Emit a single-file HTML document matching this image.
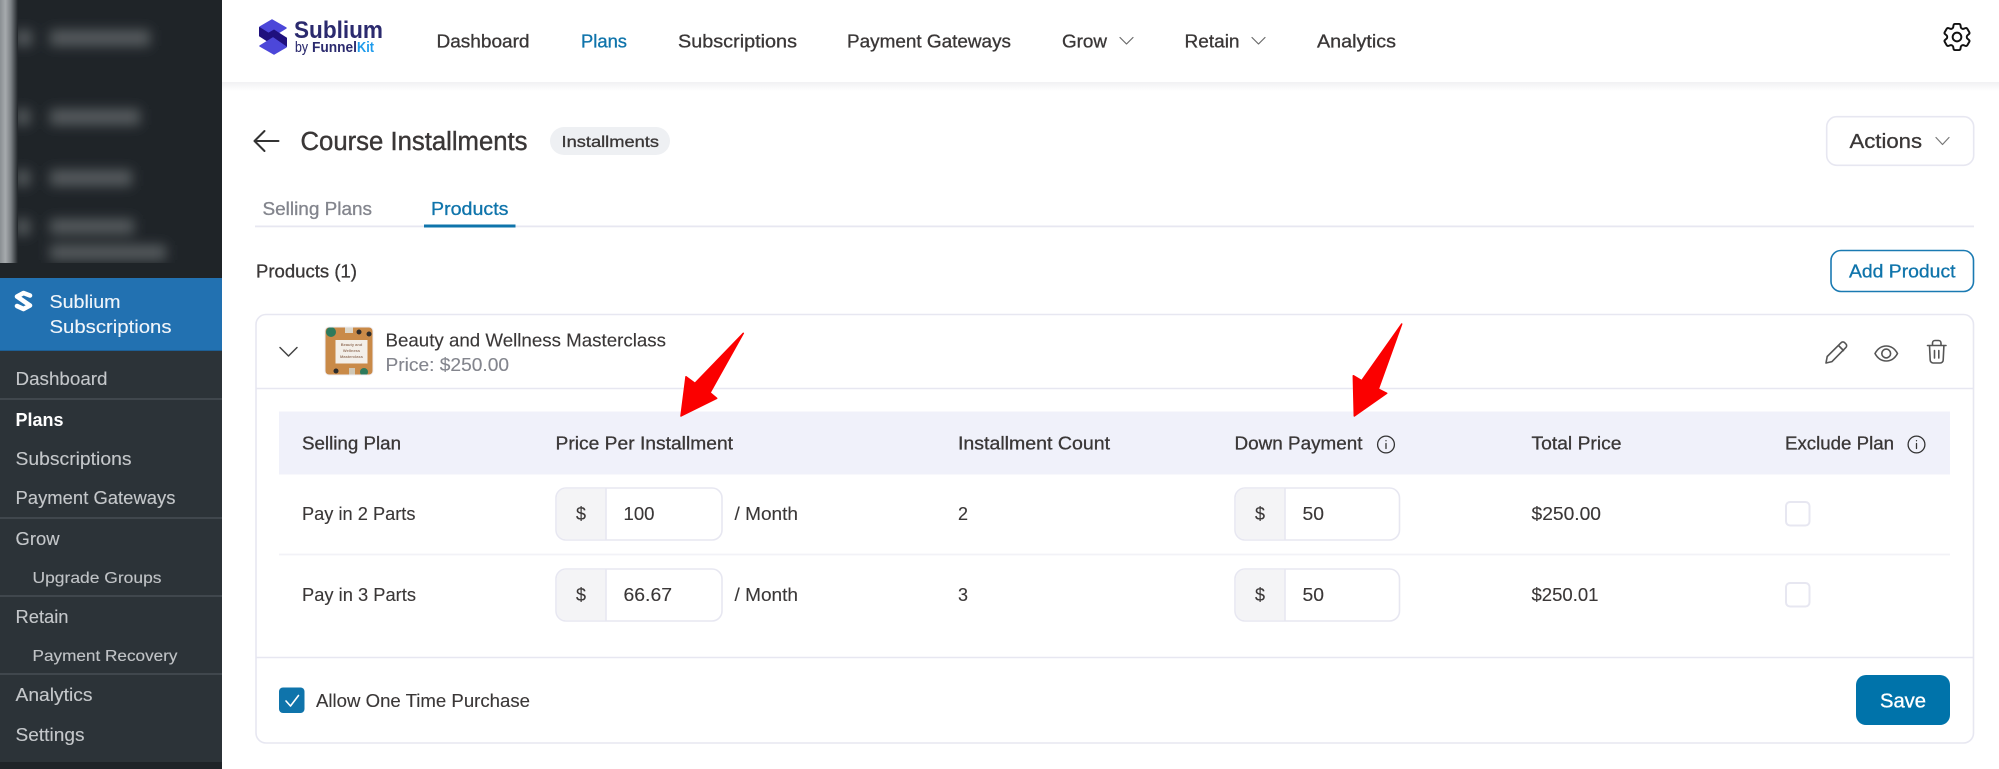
<!DOCTYPE html>
<html lang="en"><head><meta charset="utf-8"><title>Course Installments</title>
<style>
html,body{margin:0;padding:0;background:#fff;width:1999px;height:769px;overflow:hidden}
svg{display:block;position:absolute;left:0;top:0;filter:blur(.35px)}
text{font-family:"Liberation Sans",sans-serif;font-size:18px;fill:#3a3737;stroke:#3a3737;stroke-width:.12px}
.m{stroke:#3a3737;stroke-width:.3px}
.g{fill:#83858d;stroke:#83858d}
.bm{fill:#0f74ab;stroke:#0f74ab;stroke-width:.3px}
.s{fill:#c4c7ca;stroke:#c4c7ca;font-size:18px}
.ss{fill:#c0c3c6;stroke:#c0c3c6;font-size:16px}
.ln{fill:none;stroke:#e7e7f1;stroke-width:1.6}
.ic{fill:none;stroke:#555;stroke-width:1.6;stroke-linecap:round;stroke-linejoin:round}
.ch{fill:none;stroke:#6a6a6a;stroke-width:1.2;stroke-linecap:round;stroke-linejoin:round}
.w{fill:#f0f5fa;stroke:#f0f5fa}
</style></head><body>
<svg width="1999" height="769" viewBox="0 0 1999 769" xmlns="http://www.w3.org/2000/svg">
<defs>
<filter id="bl" filterUnits="userSpaceOnUse" x="0" y="0" width="222" height="290"><feGaussianBlur stdDeviation="6"/></filter>
<linearGradient id="sh" x1="0" y1="0" x2="0" y2="1"><stop offset="0" stop-color="#f1f1f3"/><stop offset="1" stop-color="#fff"/></linearGradient>
<linearGradient id="st" x1="0" y1="0" x2="1" y2="0"><stop offset="0" stop-color="#8a8f93"/><stop offset=".3" stop-color="#a6aaad"/><stop offset=".6" stop-color="#7c8185"/><stop offset="1" stop-color="#1f2428"/></linearGradient>
<clipPath id="top"><rect x="0" y="0" width="222" height="263"/></clipPath>
<clipPath id="th"><rect x="325" y="327" width="48" height="48" rx="4"/></clipPath>
</defs>

<!-- main header -->
<rect x="222" y="82" width="1777" height="9" fill="url(#sh)"/>

<!-- admin sidebar -->
<rect x="0" y="0" width="222" height="769" fill="#2c3338"/>
<rect x="0" y="0" width="222" height="278" fill="#1f2428"/>
<g clip-path="url(#top)">
  <g fill="#565b5f" filter="url(#bl)">
    <rect x="50" y="30" width="100" height="16"/>
    <rect x="50" y="109" width="90" height="16"/>
    <rect x="50" y="170" width="82" height="16"/>
    <rect x="50" y="219" width="84" height="15"/>
    <rect x="50" y="245" width="116" height="15"/>
    <rect x="16" y="30" width="16" height="16"/>
    <rect x="16" y="109" width="14" height="16"/>
    <rect x="16" y="170" width="14" height="16"/>
    <rect x="16" y="219" width="14" height="16"/>
  </g>
  <rect x="0" y="0" width="18" height="263" fill="url(#st)"/>
</g>
<rect x="0" y="278" width="222" height="73" fill="#2271b1"/>
<rect x="0" y="350" width="222" height="1" fill="#1d5f95"/>
<path d="M30 295.5L23.5 293L17 296.5L30 305.5L23.5 309L17 306" fill="none" stroke="#fff" stroke-width="4.6" stroke-linejoin="round" stroke-linecap="round"/>
<text class="w" x="49.5" y="308" textLength="71" lengthAdjust="spacingAndGlyphs">Sublium</text>
<text class="w" x="49.5" y="333" textLength="122" lengthAdjust="spacingAndGlyphs">Subscriptions</text>

<g fill="#40474d">
  <rect x="0" y="398" width="222" height="2"/>
  <rect x="0" y="517" width="222" height="2"/>
  <rect x="0" y="595" width="222" height="2"/>
  <rect x="0" y="673" width="222" height="2"/>
</g>
<rect x="0" y="762" width="222" height="7" fill="#1f2428"/>
<text class="s" x="15.5" y="385" textLength="92" lengthAdjust="spacingAndGlyphs">Dashboard</text>
<text x="15.5" y="426" style="fill:#fff;stroke:none;font-weight:700" textLength="48" lengthAdjust="spacingAndGlyphs">Plans</text>
<text class="s" x="15.5" y="465" textLength="116" lengthAdjust="spacingAndGlyphs">Subscriptions</text>
<text class="s" x="15.5" y="504" textLength="160" lengthAdjust="spacingAndGlyphs">Payment Gateways</text>
<text class="s" x="15.5" y="545" textLength="44" lengthAdjust="spacingAndGlyphs">Grow</text>
<text class="ss" x="32.5" y="583" textLength="129" lengthAdjust="spacingAndGlyphs">Upgrade Groups</text>
<text class="s" x="15.5" y="623" textLength="53" lengthAdjust="spacingAndGlyphs">Retain</text>
<text class="ss" x="32.5" y="661" textLength="145" lengthAdjust="spacingAndGlyphs">Payment Recovery</text>
<text class="s" x="15.5" y="701" textLength="77" lengthAdjust="spacingAndGlyphs">Analytics</text>
<text class="s" x="15.5" y="741" textLength="69" lengthAdjust="spacingAndGlyphs">Settings</text>

<!-- logo -->
<g transform="translate(259 19)" stroke-linejoin="round">
  <polygon points="1,8 13,1 27,9 14,17" fill="#4c47d9" stroke="#4c47d9" stroke-width="1.5"/>
  <polygon points="0.5,8.5 14,17 20,21 13,25 0.5,17" fill="#1f107d" stroke="#1f107d" stroke-width="1"/>
  <polygon points="27.5,27.5 14,19 8,15 15,11 27.5,19" fill="#1f107d" stroke="#1f107d" stroke-width="1"/>
  <polygon points="27,28 15,35 1,27 14,19" fill="#4c47d9" stroke="#4c47d9" stroke-width="1.5"/>
</g>
<text x="294" y="38" style="font-size:24px;font-weight:700;fill:#2b2a6e;stroke:none" textLength="89" lengthAdjust="spacingAndGlyphs">Sublium</text>
<text x="295" y="52" style="font-size:15px;fill:#2b2a6e;stroke:#2b2a6e" textLength="13" lengthAdjust="spacingAndGlyphs">by</text>
<text x="312" y="52" style="font-size:15px;font-weight:700;fill:#2b2a6e;stroke:none" textLength="45" lengthAdjust="spacingAndGlyphs">Funnel</text>
<text x="357" y="52" style="font-size:15px;font-weight:700;fill:#1d9bec;stroke:none" textLength="17" lengthAdjust="spacingAndGlyphs">Kit</text>

<!-- top nav -->
<text class="m" x="436.5" y="47.5" textLength="93" lengthAdjust="spacingAndGlyphs">Dashboard</text>
<text class="bm" x="581" y="47.5" textLength="46" lengthAdjust="spacingAndGlyphs">Plans</text>
<text class="m" x="678" y="47.5" textLength="119" lengthAdjust="spacingAndGlyphs">Subscriptions</text>
<text class="m" x="847" y="47.5" textLength="164" lengthAdjust="spacingAndGlyphs">Payment Gateways</text>
<text class="m" x="1062" y="47.5" textLength="45" lengthAdjust="spacingAndGlyphs">Grow</text>
<path d="M1120 37.5l6.5 6.5 6.5-6.5" class="ch"/>
<text class="m" x="1184.5" y="47.5" textLength="55" lengthAdjust="spacingAndGlyphs">Retain</text>
<path d="M1252 37.5l6.5 6.5 6.5-6.5" class="ch"/>
<text class="m" x="1317" y="47.5" textLength="79" lengthAdjust="spacingAndGlyphs">Analytics</text>
<g transform="translate(1939.6 19.6) scale(1.45)" fill="none" stroke="#111" stroke-width="1.35" stroke-linecap="round" stroke-linejoin="round">
<path d="M9.594 3.94c.09-.542.56-.94 1.11-.94h2.593c.55 0 1.02.398 1.11.94l.213 1.281c.063.374.313.686.645.87.074.04.147.083.22.127.324.196.72.257 1.075.124l1.217-.456a1.125 1.125 0 011.37.49l1.296 2.247a1.125 1.125 0 01-.26 1.431l-1.003.827c-.293.24-.438.613-.431.992a6.759 6.759 0 010 .255c-.007.378.138.75.43.99l1.005.828c.424.35.534.954.26 1.43l-1.298 2.247a1.125 1.125 0 01-1.369.491l-1.217-.456c-.355-.133-.75-.072-1.076.124a6.57 6.57 0 01-.22.128c-.331.183-.581.495-.644.869l-.213 1.28c-.09.543-.56.941-1.11.941h-2.594c-.55 0-1.02-.398-1.11-.94l-.213-1.281c-.062-.374-.312-.686-.644-.87a6.52 6.52 0 01-.22-.127c-.325-.196-.72-.257-1.076-.124l-1.217.456a1.125 1.125 0 01-1.369-.49l-1.297-2.247a1.125 1.125 0 01.26-1.431l1.004-.827c.292-.24.437-.613.43-.992a6.932 6.932 0 010-.255c.007-.378-.138-.75-.43-.99l-1.004-.828a1.125 1.125 0 01-.26-1.43l1.297-2.247a1.125 1.125 0 011.37-.491l1.216.456c.356.133.751.072 1.076-.124.072-.044.146-.087.22-.128.332-.183.582-.495.644-.869l.214-1.281z"/>
<circle cx="12" cy="12" r="3"/></g>

<!-- title row -->
<path d="M278.5 141H255M264.5 131l-10 10 10 10" fill="none" stroke="#333" stroke-width="2" stroke-linecap="round" stroke-linejoin="round"/>
<text class="m" x="300.5" y="150" style="font-size:25.5px;stroke-width:.4px" textLength="227" lengthAdjust="spacingAndGlyphs">Course Installments</text>
<rect x="550" y="127" width="120" height="28" rx="14" fill="#eef0f3"/>
<text class="m" x="561.5" y="147" style="font-size:15.5px" textLength="97.5" lengthAdjust="spacingAndGlyphs">Installments</text>
<rect x="1826.7" y="116.7" width="147" height="48.6" rx="10" fill="#fff" class="ln"/>
<text class="m" x="1849.5" y="148" style="font-size:20px" textLength="72.5" lengthAdjust="spacingAndGlyphs">Actions</text>
<path d="M1936 137.5l6.5 7 6.5-7" class="ch" style="stroke:#777"/>

<!-- tabs -->
<text class="g" x="262.5" y="215" style="stroke-width:.3px" textLength="109.5" lengthAdjust="spacingAndGlyphs">Selling Plans</text>
<text class="bm" x="431" y="215" textLength="77.5" lengthAdjust="spacingAndGlyphs">Products</text>
<rect x="255" y="225.5" width="1719" height="1.8" fill="#e7e7f1"/>
<rect x="424" y="224.5" width="91.5" height="3" fill="#0f74ab"/>

<text class="m" x="256" y="277.5" textLength="101" lengthAdjust="spacingAndGlyphs">Products (1)</text>
<rect x="1831" y="250.5" width="142.5" height="41" rx="10" fill="#fff" stroke="#1a7ab2" stroke-width="1.6"/>
<text class="bm" x="1849" y="277.5" textLength="106.5" lengthAdjust="spacingAndGlyphs">Add Product</text>

<!-- card -->
<rect x="256" y="314.5" width="1717.5" height="428.5" rx="10" fill="#fff" class="ln"/>
<path d="M256 388.5H1973.5M256 657.5H1973.5" class="ln"/>
<path d="M280 347.5l8.5 8.5 8.5-8.5" fill="none" stroke="#444" stroke-width="1.5" stroke-linecap="round" stroke-linejoin="round"/>

<!-- thumbnail -->
<g clip-path="url(#th)">
  <rect x="325" y="327" width="48" height="48" fill="#c98a48"/>
  <circle cx="331" cy="332" r="5" fill="#2d7a5c"/>
  <rect x="345" y="327" width="8" height="6" fill="#ddd7ca"/>
  <circle cx="359" cy="332" r="2.5" fill="#2c2c2c"/><circle cx="369" cy="334" r="2.5" fill="#2c2c2c"/>
  <circle cx="336" cy="371" r="2.5" fill="#2c2c2c"/><rect x="349" y="368" width="6" height="7" fill="#cfc7b6"/>
  <circle cx="364" cy="372" r="4" fill="#2d7a5c"/>
  <rect x="335.5" y="340" width="32" height="23.5" fill="#f3efe9"/>
  <text x="351.5" y="346" text-anchor="middle" style="font-size:4px;font-weight:700;fill:#9a7a66;stroke:none">Beauty and</text>
  <text x="351.5" y="352" text-anchor="middle" style="font-size:4px;font-weight:700;fill:#9a7a66;stroke:none">Wellness</text>
  <text x="351.5" y="358" text-anchor="middle" style="font-size:4px;font-weight:700;fill:#9a7a66;stroke:none">Masterclass</text>
</g>
<rect x="325" y="327" width="48" height="48" rx="4" fill="none" stroke="#efeff5" stroke-width="1"/>

<text x="385.5" y="346.5" textLength="280.5" lengthAdjust="spacingAndGlyphs">Beauty and Wellness Masterclass</text>
<text class="g" x="385.5" y="371" textLength="123.5" lengthAdjust="spacingAndGlyphs">Price: $250.00</text>

<!-- row icons -->
<path class="ic" d="M1826 363l1.2-6.5L1841 342.8a2.6 2.6 0 0 1 3.8 0l1 1a2.6 2.6 0 0 1 0 3.8L1832 361.6zM1838.5 345.5l5 5"/>
<path class="ic" d="M1875 353.5c5.5-10 17-10 22.5 0c-5.5 10-17 10-22.5 0z"/><circle class="ic" cx="1886.2" cy="353.5" r="4.4"/>
<path class="ic" d="M1927.5 345.5h18.5M1932.5 345.5v-2.5a2.5 2.5 0 0 1 2.5-2.5h3.5a2.5 2.5 0 0 1 2.5 2.5v2.5M1929.5 345.5l.7 14.5a3 3 0 0 0 3 3h7a3 3 0 0 0 3-3l.7-14.5M1934.5 350.5v7.5M1938.8 350.5v7.5"/>

<!-- table header -->
<rect x="279" y="411.5" width="1671" height="63" fill="#f0f1fa"/>
<text class="m" x="302" y="449.5" textLength="99" lengthAdjust="spacingAndGlyphs">Selling Plan</text>
<text class="m" x="555.5" y="449.5" textLength="177.5" lengthAdjust="spacingAndGlyphs">Price Per Installment</text>
<text class="m" x="958" y="449.5" textLength="152" lengthAdjust="spacingAndGlyphs">Installment Count</text>
<text class="m" x="1234.5" y="449.5" textLength="128" lengthAdjust="spacingAndGlyphs">Down Payment</text>
<text class="m" x="1531.5" y="449.5" textLength="90" lengthAdjust="spacingAndGlyphs">Total Price</text>
<text class="m" x="1785" y="449.5" textLength="109" lengthAdjust="spacingAndGlyphs">Exclude Plan</text>
<g fill="none" stroke="#333" stroke-width="1.3" stroke-linecap="round">
  <circle cx="1386" cy="444.5" r="8.4"/><path d="M1386 443.5v5M1386 440.6v.1"/>
  <circle cx="1916.5" cy="444.5" r="8.4"/><path d="M1916.5 443.5v5M1916.5 440.6v.1"/>
</g>

<path d="M279 554.5H1950" stroke="#f2f2f7" stroke-width="1.8" fill="none"/>

<!-- row 1 -->
<text x="302" y="520" textLength="113.5" lengthAdjust="spacingAndGlyphs">Pay in 2 Parts</text>
<rect x="556" y="488" width="166" height="52" rx="10" fill="#fff" class="ln"/>
<path d="M566 488.8h40v50.4h-40a9.2 9.2 0 0 1-9.2-9.2v-32a9.2 9.2 0 0 1 9.2-9.2z" fill="#f4f4f6"/>
<path d="M606 488v52" class="ln"/>
<text x="576" y="520" textLength="10" lengthAdjust="spacingAndGlyphs">$</text>
<text x="623.5" y="520" textLength="31" lengthAdjust="spacingAndGlyphs">100</text>
<text x="734.5" y="520" textLength="63.5" lengthAdjust="spacingAndGlyphs">/ Month</text>
<text x="958" y="520" textLength="10" lengthAdjust="spacingAndGlyphs">2</text>
<rect x="1235" y="488" width="164.5" height="52" rx="10" fill="#fff" class="ln"/>
<path d="M1245 488.8h40v50.4h-40a9.2 9.2 0 0 1-9.2-9.2v-32a9.2 9.2 0 0 1 9.2-9.2z" fill="#f4f4f6"/>
<path d="M1285 488v52" class="ln"/>
<text x="1255" y="520" textLength="10" lengthAdjust="spacingAndGlyphs">$</text>
<text x="1302.5" y="520" textLength="21.5" lengthAdjust="spacingAndGlyphs">50</text>
<text x="1531.5" y="520" textLength="69.5" lengthAdjust="spacingAndGlyphs">$250.00</text>
<rect x="1786" y="502" width="23.5" height="23.5" rx="4" fill="#fff" stroke="#e7e7f1" stroke-width="2"/>

<!-- row 2 -->
<text x="302" y="601" textLength="114" lengthAdjust="spacingAndGlyphs">Pay in 3 Parts</text>
<rect x="556" y="569" width="166" height="52" rx="10" fill="#fff" class="ln"/>
<path d="M566 569.8h40v50.4h-40a9.2 9.2 0 0 1-9.2-9.2v-32a9.2 9.2 0 0 1 9.2-9.2z" fill="#f4f4f6"/>
<path d="M606 569v52" class="ln"/>
<text x="576" y="601" textLength="10" lengthAdjust="spacingAndGlyphs">$</text>
<text x="623.5" y="601" textLength="48.5" lengthAdjust="spacingAndGlyphs">66.67</text>
<text x="734.5" y="601" textLength="63.5" lengthAdjust="spacingAndGlyphs">/ Month</text>
<text x="958" y="601" textLength="10" lengthAdjust="spacingAndGlyphs">3</text>
<rect x="1235" y="569" width="164.5" height="52" rx="10" fill="#fff" class="ln"/>
<path d="M1245 569.8h40v50.4h-40a9.2 9.2 0 0 1-9.2-9.2v-32a9.2 9.2 0 0 1 9.2-9.2z" fill="#f4f4f6"/>
<path d="M1285 569v52" class="ln"/>
<text x="1255" y="601" textLength="10" lengthAdjust="spacingAndGlyphs">$</text>
<text x="1302.5" y="601" textLength="21.5" lengthAdjust="spacingAndGlyphs">50</text>
<text x="1531.5" y="601" textLength="67" lengthAdjust="spacingAndGlyphs">$250.01</text>
<rect x="1786" y="583" width="23.5" height="23.5" rx="4" fill="#fff" stroke="#e7e7f1" stroke-width="2"/>

<!-- footer -->
<rect x="279" y="687.5" width="25.5" height="25.5" rx="4" fill="#0f74ab"/>
<path d="M286 701l4.5 5 8-10.5" fill="none" stroke="#fff" stroke-width="1.6" stroke-linecap="round" stroke-linejoin="round"/>
<text x="316" y="707" textLength="214" lengthAdjust="spacingAndGlyphs">Allow One Time Purchase</text>
<rect x="1856" y="675" width="94" height="50" rx="10" fill="#0073aa"/>
<text x="1880" y="707.5" style="fill:#fff;stroke:#fff;stroke-width:.35px;font-size:20px" textLength="46" lengthAdjust="spacingAndGlyphs">Save</text>

<!-- red arrows -->
<polygon points="743.3,333.3 710,392.7 716.7,398.3 681,416 686,376.7 695,383.3" fill="#fb0000" stroke="#fb0000" stroke-width="1.5" stroke-linejoin="round"/>
<polygon points="1401.7,324 1378.3,389 1386.7,393.3 1354.3,416 1353.3,375.7 1361.7,380.7" fill="#fb0000" stroke="#fb0000" stroke-width="1.5" stroke-linejoin="round"/>
</svg>
</body></html>
